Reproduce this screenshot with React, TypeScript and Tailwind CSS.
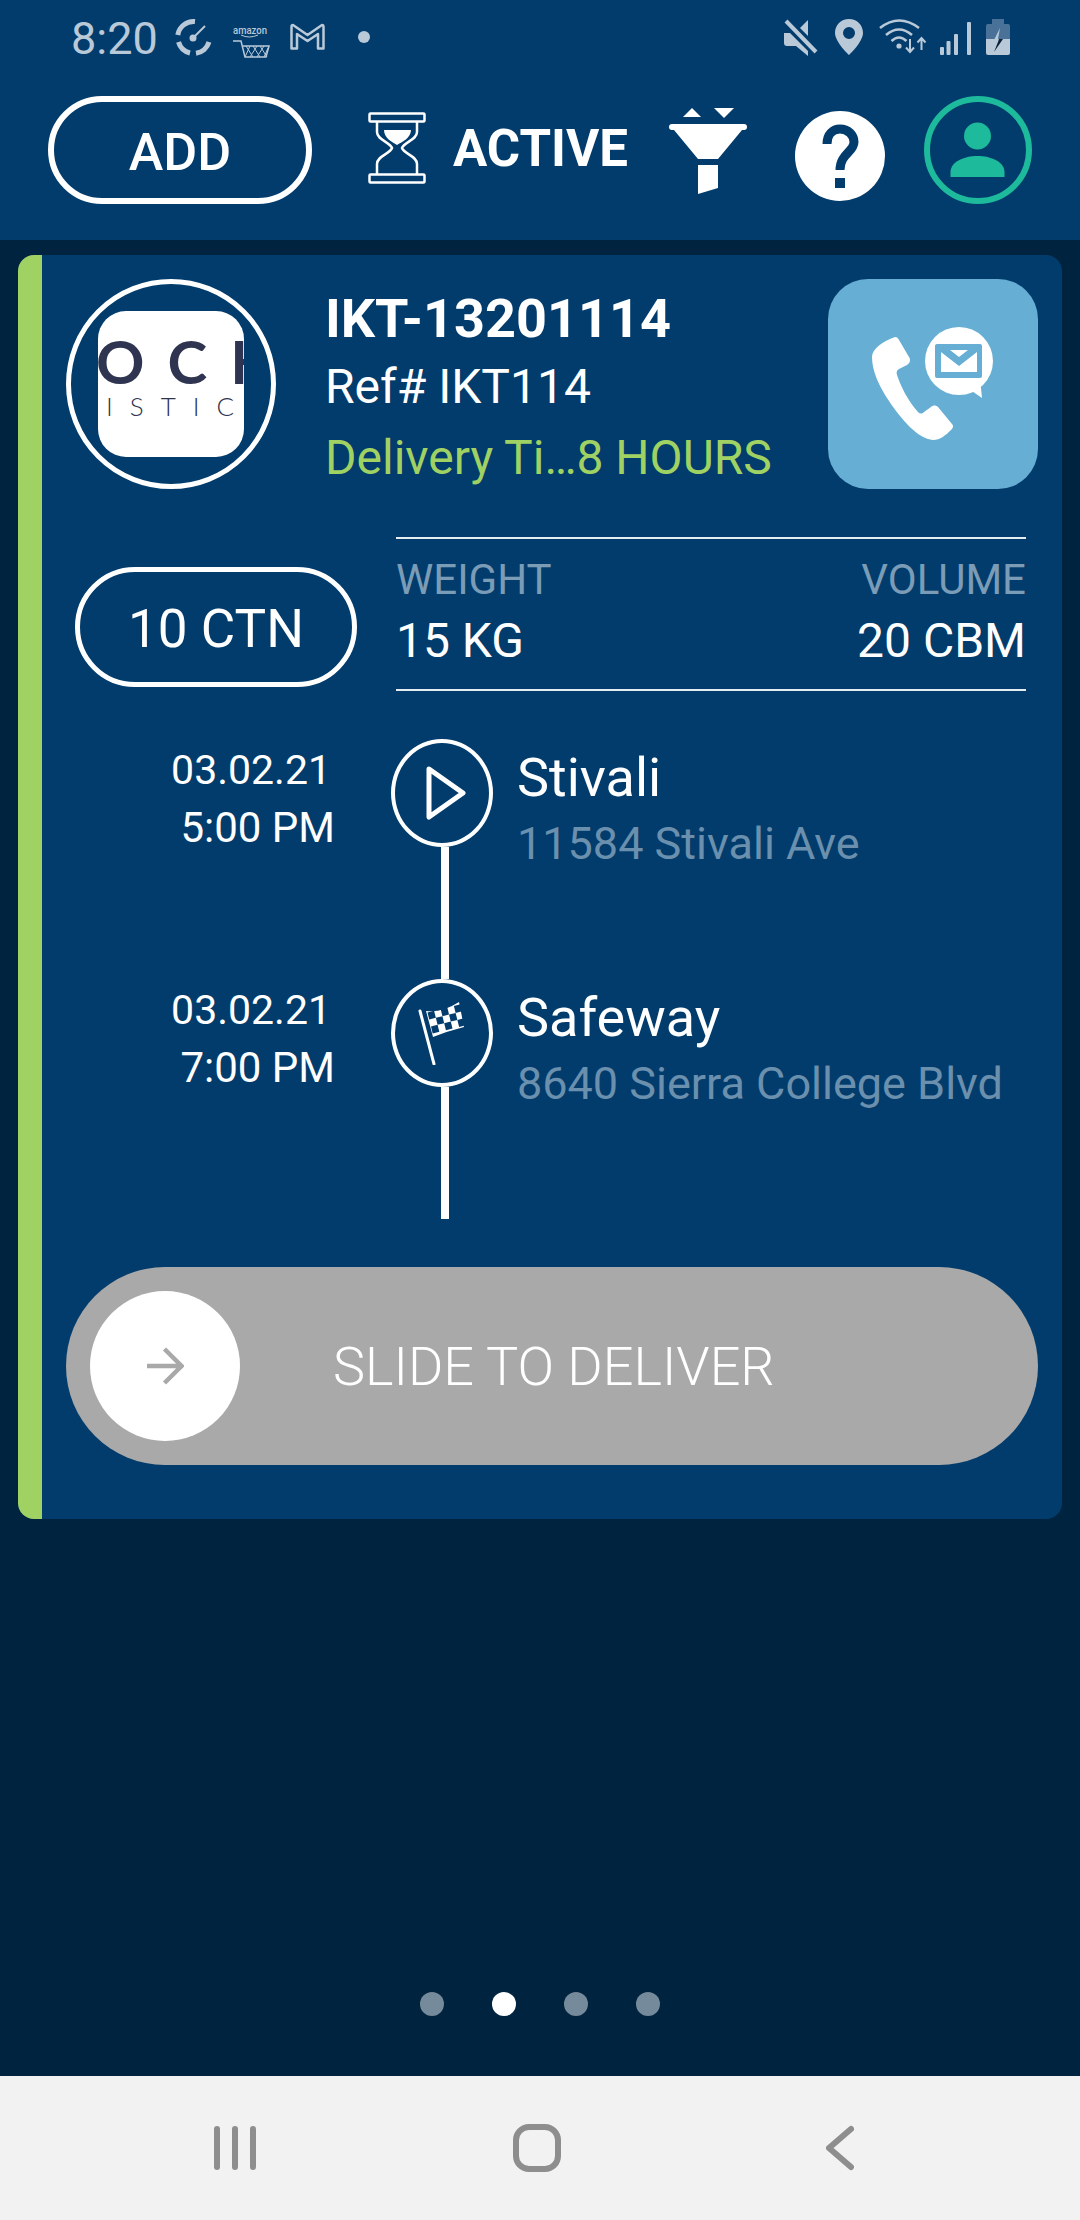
const stops = [
  { date: "03.02.21", time: "5:00 PM", name: "Stivali", address: "11584 Stivali Ave", icon: "play" },
  { date: "03.02.21", time: "7:00 PM", name: "Safeway", address: "8640 Sierra College Blvd", icon: "flag" },
];

const checkers = [
  [0, 0], [2, 0], [4, 0],
  [1, 1], [3, 1],
  [0, 2], [2, 2], [4, 2],
];

function StatusBar() {
  return (
    <div className="flex h-[96px] items-start text-[#b9c9d8]">
      <span className="ml-[71px] mt-[14px] w-[83px] text-[45px] leading-[50px]">8:20</span>
      {/* gauge */}
      <svg className="ml-[21px] mt-[18px]" width="37" height="38" viewBox="0 0 37 38" fill="none" stroke="currentColor" strokeWidth="5">
        <path d="M20 3.5A16 16 0 0 0 2.8 17" />
        <path d="M3.5 24A16 16 0 0 0 15 35" />
        <path d="M21 35.2A16 16 0 0 0 34 24" />
        <path d="M18 20L30 8" strokeWidth="2" />
        <circle cx="18" cy="20" r="3.5" fill="currentColor" stroke="none" />
      </svg>
      {/* amazon */}
      <svg className="ml-[21px] mt-[25px]" width="37" height="33" viewBox="0 0 37 33" fill="none" stroke="currentColor">
        <text x="0" y="9" fontSize="11" fontFamily="Roboto" fontWeight="500" fill="currentColor" stroke="none" textLength="34" lengthAdjust="spacingAndGlyphs">amazon</text>
        <path d="M8 10Q16 14 25 10" strokeWidth="1" />
        <path d="M0 16H8L12 32H33L36 21H10" strokeWidth="1.5" />
        <path d="M13 21L20 32M20 21L27 32M27 21L34 32M17 21L12 32M24 21L17 32M31 21L24 32M35 23L31 32" strokeWidth="1" />
      </svg>
      {/* gmail */}
      <svg className="ml-[20px] mt-[23px]" width="35" height="27" viewBox="0 0 35 27" fill="none" stroke="currentColor" strokeWidth="2.5" strokeLinejoin="round">
        <path d="M3 2L17.5 12L32 2Q33.5 2 33.5 4V25.5H28V11L17.5 18L7 11V25.5H1.5V4Q1.5 2 3 2Z" />
      </svg>
      <span className="ml-[33px] mt-[31px] h-[12px] w-[12px] rounded-full bg-[#b9c9d8]" />
      {/* mute */}
      <svg className="ml-[414px] mt-[19px]" width="34" height="37" viewBox="0 0 34 37" fill="currentColor">
        <path d="M16 9L24 1V17Z" />
        <path d="M0 14H6L24 32V37L12 27H3Q0 27 0 24Z" />
        <path d="M2 2L32 33" stroke="currentColor" strokeWidth="4" />
      </svg>
      {/* location */}
      <svg className="ml-[17px] mt-[19px]" width="28" height="36" viewBox="0 0 28 36" fill="currentColor" fillRule="evenodd">
        <path d="M14 0C6 0 0 6 0 14C0 23 14 36 14 36C14 36 28 23 28 14C28 6 22 0 14 0ZM14 8A6 6 0 1 1 14 20A6 6 0 1 1 14 8Z" />
      </svg>
      {/* wifi */}
      <svg className="ml-[16px] mt-[19px]" width="48" height="36" viewBox="0 0 48 36" fill="none" stroke="currentColor" strokeWidth="2.6">
        <path d="M1 9Q20 -6 40 9" />
        <path d="M7 16Q20 5 33 16" />
        <path d="M12.5 22Q20 15 27.5 22" />
        <circle cx="20" cy="27" r="2.6" fill="currentColor" stroke="none" />
        <path d="M31 20V33M27 28.5L31 33L35 28.5" strokeWidth="2" />
        <path d="M42.5 31V19M38.5 23.5L42.5 19L46.5 23.5" strokeWidth="2" />
      </svg>
      {/* signal */}
      <svg className="ml-[13px] mt-[21px]" width="31" height="34" viewBox="0 0 31 34" fill="currentColor">
        <rect x="0" y="26" width="4" height="8" rx="1" />
        <rect x="6.5" y="20" width="4" height="14" rx="1" />
        <rect x="14" y="13" width="4" height="21" rx="1" />
        <rect x="27" y="1" width="4" height="33" rx="1" />
      </svg>
      {/* battery */}
      <svg className="ml-[15px] mt-[19px]" width="24" height="36" viewBox="0 0 24 36">
        <path d="M6 0H18V5H22Q24 5 24 7V20H0V7Q0 5 2 5H6Z" fill="#4a7299" />
        <path d="M0 20H24V34Q24 36 22 36H2Q0 36 0 34Z" fill="#b9c9d8" />
        <path d="M14 9L7 23H12L13.5 20H17H12Z" fill="#b9c9d8" />
        <path d="M12 23L8 33L17 20H13Z" fill="#0c2238" />
      </svg>
    </div>
  );
}

function Toolbar() {
  return (
    <div className="flex h-[144px] items-start text-white">
      <div className="ml-[48px] flex h-[108px] w-[264px] items-center justify-center rounded-full border-[6px] border-white pt-[6px] text-[52px] font-medium">
        ADD
      </div>
      {/* hourglass */}
      <svg className="ml-[56px] mt-[16px]" width="58" height="72" viewBox="0 0 58 72" fill="none" stroke="white" strokeWidth="2.5">
        <rect x="1.5" y="1.5" width="55" height="8" rx="1" />
        <rect x="1.5" y="62.5" width="55" height="8" rx="1" />
        <path d="M9 10V20C9 28 22 30 24 36C22 42 9 44 9 52V62" />
        <path d="M49 10V20C49 28 36 30 34 36C36 42 49 44 49 52V62" />
        <path d="M16 18H43C43 26 34 30 29 33C24 30 16 26 16 18Z" fill="white" stroke="none" />
      </svg>
      <span className="ml-[27px] mt-[23px] w-[173px] text-[51px] font-bold leading-[60px] whitespace-nowrap">ACTIVE</span>
      {/* filter */}
      <svg className="ml-[43px] mt-[12px]" width="78" height="86" viewBox="0 0 78 86" fill="white">
        <path d="M14 9H32L23 0Z" />
        <path d="M45 0H65L55 10Z" />
        <rect x="0" y="16" width="78" height="6" rx="3" />
        <path d="M5 22H73L49 51H29Z" />
        <path d="M29 57H49V80L29 86Z" />
      </svg>
      {/* help */}
      <svg className="ml-[48px] mt-[15px]" width="90" height="90" viewBox="0 0 90 90">
        <circle cx="45" cy="45" r="45" fill="white" />
        <path d="M32 33C32 23 38 18 45 18C53 18 59 24 59 31C59 41 45 43 45 59" fill="none" stroke="#023c6c" strokeWidth="9" />
        <rect x="40" y="67" width="10" height="10" fill="#023c6c" />
      </svg>
      {/* profile */}
      <div className="ml-[39px] h-[108px] w-[108px] rounded-full border-[6px] border-[#1dba9b]">
        <svg className="-m-[6px]" width="108" height="108" viewBox="0 0 108 108" fill="#1dba9b">
          <circle cx="53.5" cy="40" r="13.5" />
          <path d="M26.5 81V76C26.5 66 40 60 53.5 60C67 60 80.5 66 80.5 76V81Z" />
        </svg>
      </div>
    </div>
  );
}

function CardHead() {
  return (
    <div className="flex items-start pt-[24px]">
      <div className="ml-[24px] flex h-[210px] w-[210px] items-center justify-center rounded-full border-[5px] border-white">
        <div className="h-[146px] w-[146px] overflow-hidden rounded-[28px] bg-white pt-[20px] font-[Lato,sans-serif] whitespace-nowrap text-[#2f3450]">
          <div className="-ml-[2px] text-[60px] font-bold leading-[60px] tracking-[23px]">OCK</div>
          <div className="pl-[8px] text-[26px] font-light leading-[30px] tracking-[17px]">ISTIC</div>
        </div>
      </div>
      <div className="ml-[49px] pt-[10px]">
        <div className="text-[54px] font-bold leading-[60px] text-white">IKT-13201114</div>
        <div className="mt-[12px] text-[48px] leading-[52px] text-white">Ref# IKT114</div>
        <div className="mt-[19px] text-[48px] leading-[52px] whitespace-nowrap text-[#a0d163]">Delivery Ti…8 HOURS</div>
      </div>
      <div className="ml-auto mr-[24px] h-[210px] w-[210px] shrink-0 rounded-[40px] bg-[#66aed3]">
        {/* call + message */}
        <svg width="210" height="210" viewBox="0 0 210 210" fill="white">
          <path d="M67 58C69 58 70 59 71 61L81 78C83 81 82 84 79 86L71 90C69 91 68 93 69 96C73 108 80 122 90 133C92 135 94 135 96 133L103 128C105 126 108 126 110 128L124 145C126 147 125 149 123 151C118 156 112 161 105 161C90 160 73 140 61 122C51 107 44 92 44 78C44 70 55 62 67 58Z" />
          <circle cx="131" cy="82" r="34" />
          <path d="M141 110L154 119L152 100Z" />
          <rect x="107" y="65" width="47" height="34" rx="2" fill="#66aed3" />
          <path d="M122 71H140L131 78Z" />
          <path d="M113 73L131 87L149 73V93H113Z" />
        </svg>
      </div>
    </div>
  );
}

function Stats() {
  return (
    <div className="mt-[48px] flex items-start">
      <div className="ml-[33px] mt-[30px] flex h-[120px] w-[282px] items-center justify-center rounded-full border-[5px] border-white pt-[6px] text-[53px] text-white">
        10 CTN
      </div>
      <div className="ml-[39px] flex h-[154px] w-[630px] justify-between border-y-2 border-[#e6edf2] pt-[17px]">
        <div>
          <div className="text-[42px] leading-[48px] text-[#7b9cb6]">WEIGHT</div>
          <div className="mt-[11px] text-[48px] leading-[52px] text-white">15 KG</div>
        </div>
        <div className="text-right">
          <div className="text-[42px] leading-[48px] text-[#7b9cb6]">VOLUME</div>
          <div className="mt-[11px] text-[48px] leading-[52px] text-white">20 CBM</div>
        </div>
      </div>
    </div>
  );
}

function Timeline() {
  return (
    <div className="mt-[48px]">
      {stops.map((stop, index) => (
        <div key={index} className="flex h-[240px] items-start">
          <div className="mt-[2px] w-[293px] text-right text-[42px] leading-[58px] text-white">
            <div className="pr-[4px] text-[41px]">{stop.date}</div>
            <div>{stop.time}</div>
          </div>
          <div className="ml-[56px] flex h-full w-[102px] flex-col">
            <div className="flex h-[108px] w-[102px] items-center justify-center rounded-[50%] border-[4px] border-white">
              {stop.icon === "play" ? (
                <svg className="ml-[8px]" width="42" height="56" viewBox="0 0 42 56" fill="none" stroke="white" strokeWidth="5" strokeLinejoin="round">
                  <path d="M4 4L38 28L4 52Z" />
                </svg>
              ) : (
                <svg width="48" height="64" viewBox="0 0 48 64" fill="white">
                  <path d="M2 10L16 63" stroke="white" strokeWidth="3" strokeLinecap="round" />
                  <path d="M8 10Q24 12 41 1L46 26Q30 30 15 36Z" />
                  <g transform="translate(9.5 11.5) rotate(-14)" fill="#023c6c">
                    {checkers.map(([col, row]) => (
                      <rect key={`${col}-${row}`} x={col * 6.8} y={row * 7.2} width="6.8" height="7.2" />
                    ))}
                  </g>
                </svg>
              )}
            </div>
            <div className="ml-[50px] w-[8px] flex-1 bg-white" />
          </div>
          <div className="ml-[24px] pt-[9px]">
            <div className="text-[54px] leading-[60px] text-white">{stop.name}</div>
            <div className="mt-[10px] text-[45px] leading-[52px] whitespace-nowrap text-[#6b90ae]">{stop.address}</div>
          </div>
        </div>
      ))}
    </div>
  );
}

function Slider() {
  return (
    <div className="ml-[24px] mt-[48px] flex h-[198px] w-[972px] items-center rounded-full bg-[#a9a9a9]">
      <div className="ml-[24px] flex h-[150px] w-[150px] items-center justify-center rounded-full bg-white">
        <svg width="38" height="38" viewBox="0 0 38 38" fill="none" stroke="#a9a9a9" strokeWidth="4.5">
          <path d="M1 19H35M18.5 2L35.5 19L18.5 36" />
        </svg>
      </div>
      <span className="ml-[93px] text-[54px] font-light text-white">SLIDE TO DELIVER</span>
    </div>
  );
}

function NavBar() {
  return (
    <div className="flex h-[144px] items-center bg-[#f2f2f2]">
      <svg className="ml-[214px]" width="42" height="46" viewBox="0 0 42 46" fill="none" stroke="#8e8e8e" strokeWidth="6" strokeLinecap="round">
        <path d="M3 4V42M21 4V42M39 4V42" />
      </svg>
      <svg className="ml-[257px]" width="48" height="48" viewBox="0 0 48 48" fill="none" stroke="#8e8e8e" strokeWidth="6">
        <rect x="3" y="3" width="42" height="42" rx="13" />
      </svg>
      <svg className="ml-[265px]" width="28" height="46" viewBox="0 0 28 46" fill="none" stroke="#8e8e8e" strokeWidth="6" strokeLinecap="round" strokeLinejoin="round">
        <path d="M25 4L3 23L25 42" />
      </svg>
    </div>
  );
}

export default function App() {
  return (
    <div className="flex h-[2220px] w-[1080px] flex-col overflow-hidden bg-[#00243f] font-[Roboto,sans-serif]">
      <div className="h-[240px] bg-[#023c6c]">
        <StatusBar />
        <Toolbar />
      </div>
      <div className="ml-[18px] mt-[15px] flex h-[1264px] w-[1044px] overflow-hidden rounded-[16px] bg-[#023c6c]">
        <div className="w-[24px] bg-[#a0d163]" />
        <div className="flex-1">
          <CardHead />
          <Stats />
          <Timeline />
          <Slider />
        </div>
      </div>
      <div className="ml-[420px] mt-[473px] flex h-[24px] gap-[48px]">
        <span className="w-[24px] rounded-full bg-[#758a9a]" />
        <span className="w-[24px] rounded-full bg-white" />
        <span className="w-[24px] rounded-full bg-[#758a9a]" />
        <span className="w-[24px] rounded-full bg-[#758a9a]" />
      </div>
      <div className="mt-auto">
        <NavBar />
      </div>
    </div>
  );
}
